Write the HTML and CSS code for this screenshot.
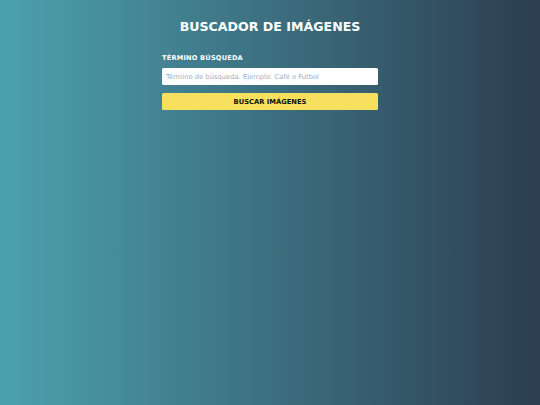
FILE: index.html
```html
<!DOCTYPE html>
<html lang="es">
<head>
<meta charset="utf-8">
<title>Buscador de Imágenes</title>
<link rel="stylesheet" href="styles.css">
</head>
<body>
<div class="page">
  <header class="header">
    <h1 class="title">BUSCADOR DE IMÁGENES</h1>
  </header>
  <form class="form">
    <label class="label" for="termino">TÉRMINO BÚSQUEDA</label>
    <input class="input" id="termino" type="text" placeholder="Término de búsqueda. Ejemplo: Café o Futbol">
    <button class="button" type="button">BUSCAR IMÁGENES</button>
  </form>
</div>
</body>
</html>
```
FILE: styles.css
```css
* { box-sizing: border-box; }
html, body { margin: 0; padding: 0; height: 100%; }
body {
  font-family: "DejaVu Sans", sans-serif;
  background: linear-gradient(to right, #4ca1af, #2c3e50);
  min-height: 405px;
}
.page {
  display: flex;
  flex-direction: column;
  align-items: center;
  padding-top: 18px;
}
.header { text-align: center; }
.title {
  margin: 0;
  color: #ffffff;
  font-size: 12.6px;
  font-weight: bold;
  letter-spacing: 0;
  line-height: 17px;
}
.form {
  width: 216px;
  margin-top: 19px;
  display: flex;
  flex-direction: column;
}
.label {
  color: #ffffff;
  font-size: 6.6px;
  font-weight: bold;
  line-height: 9px;
  letter-spacing: 0.2px;
}
.input {
  margin-top: 5px;
  height: 17px;
  border: none;
  border-radius: 1.5px;
  background: #ffffff;
  padding: 0 4px;
  font-family: "DejaVu Sans", sans-serif;
  font-size: 6.75px;
  color: #333;
}
.input::placeholder { color: #a0aec0; }
.button {
  margin-top: 8px;
  height: 17px;
  border: none;
  border-radius: 1.5px;
  background: #f6e05e;
  font-family: "DejaVu Sans", sans-serif;
  font-size: 6.75px;
  font-weight: bold;
  color: #111111;
  padding: 0;
}
```
